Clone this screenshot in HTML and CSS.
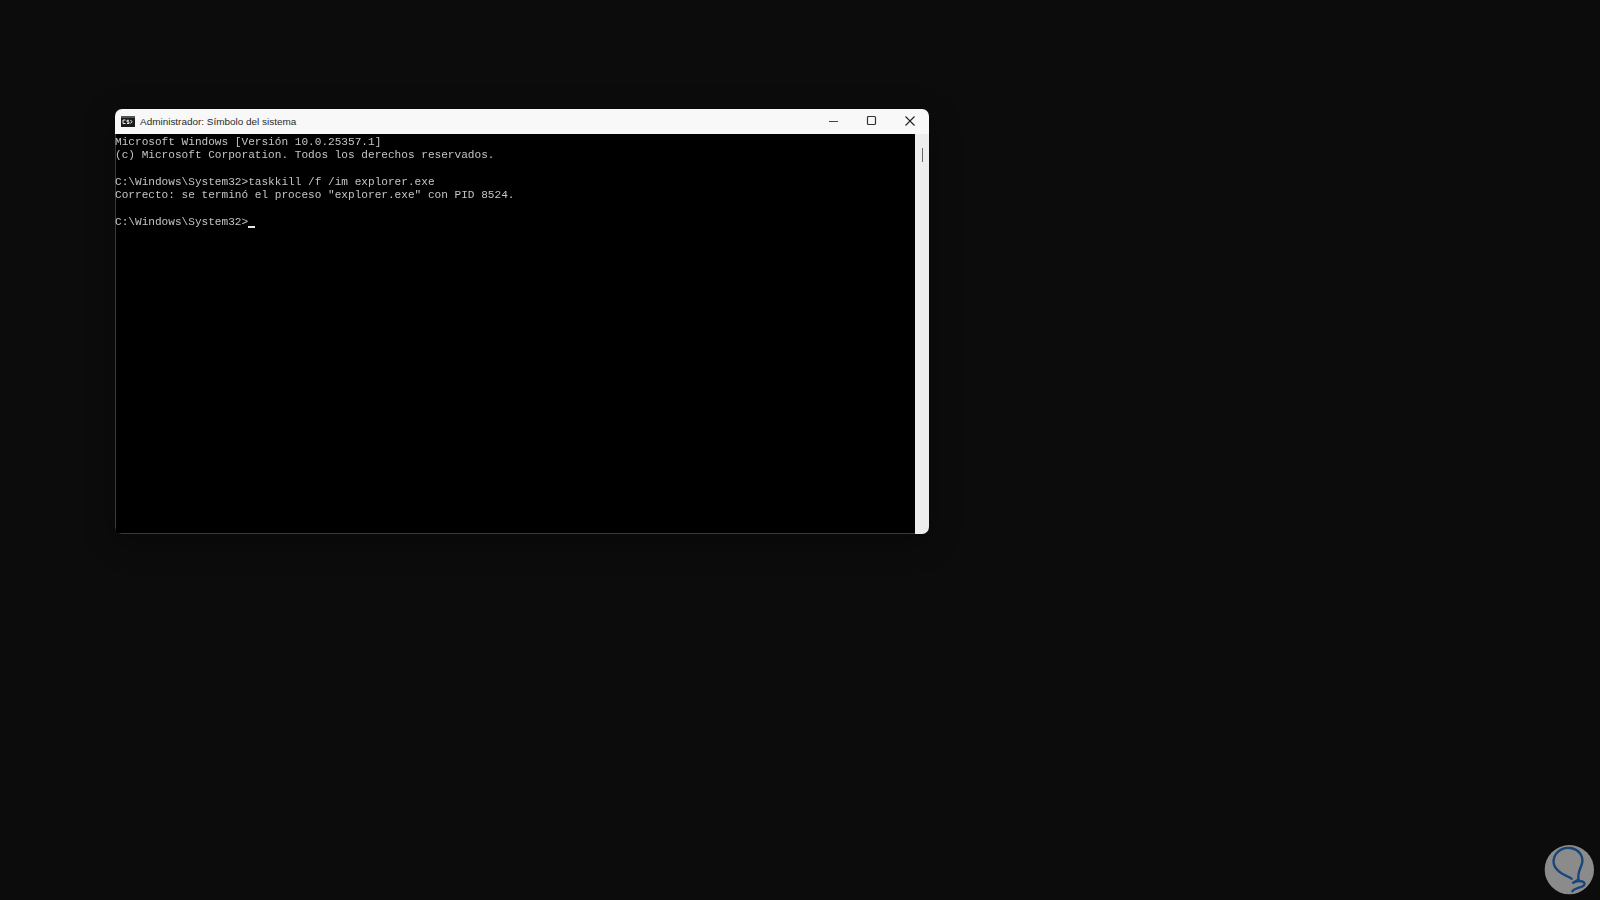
FILE: index.html
```html
<!DOCTYPE html>
<html lang="es">
<head>
<meta charset="utf-8">
<title>Administrador: Símbolo del sistema</title>
<link rel="stylesheet" href="styles.css">
</head>
<body>
<main class="desktop">
  <section class="window">
    <header class="titlebar">
      <svg class="app-icon" width="14" height="11" viewBox="0 0 14 11">
        <rect width="14" height="11" fill="#1c1c1c"/>
        <rect y="0" width="14" height="2" fill="#555"/>
        <path d="M2 4h2.5M2 4v3.5h2.5M6 7.5h2v-1.6h-2v-1.6h2M9.5 4l1.5 1.7-1.500 1.800" fill="none" stroke="#eee" stroke-width="1"/>
      </svg>
      <span class="title">Administrador: Símbolo del sistema</span>
      <div class="controls">
        <svg class="ctl" width="12" height="12" viewBox="0 0 12 12"><path d="M1 6.500h9" stroke="#444" stroke-width="1.200"/></svg>
        <svg class="ctl" width="12" height="12" viewBox="0 0 12 12"><rect x="1.500" y="1.500" width="8" height="8" rx="1" fill="none" stroke="#333" stroke-width="1.200"/></svg>
        <svg class="ctl" width="12" height="12" viewBox="0 0 12 12"><path d="M1.500 1.500l9 9M10.500 1.500l-9 9" stroke="#222" stroke-width="1.100"/></svg>
      </div>
    </header>
    <div class="client">
      <pre class="console">Microsoft Windows [Versión 10.0.25357.1]
(c) Microsoft Corporation. Todos los derechos reservados.

C:\Windows\System32&gt;taskkill /f /im explorer.exe
Correcto: se terminó el proceso "explorer.exe" con PID 8524.

C:\Windows\System32&gt;<span class="cursor"></span></pre>
      <div class="scrollbar"><span class="thumb"></span></div>
    </div>
  </section>
  <svg class="logo" width="70" height="70" viewBox="0 0 210 210">
    <circle cx="115" cy="125" r="74" fill="#8b8b8b"/>
    <path d="M122 152C100 140 72 130 68 105C65 78 90 56 118 60C146 64 160 88 152 110C146 126 138 140 143 154L124 166C138 156 166 158 160 170C155 180 132 178 124 190" fill="none" stroke="#17457a" stroke-width="7" stroke-linecap="round"/>
  </svg>
</main>
</body>
</html>
```

FILE: styles.css
```css
html, body {
  margin: 0;
  height: 100%;
  background: #0c0c0c;
}

.desktop {
  position: relative;
  width: 1600px;
  height: 900px;
  overflow: hidden;
  background: #0c0c0c;
}

.window {
  position: absolute;
  left: 115px;
  top: 109px;
  width: 814px;
  height: 425px;
  display: flex;
  flex-direction: column;
  border-radius: 7px;
  overflow: hidden;
  background: #000;
  box-shadow: 0 8px 30px rgba(0, 0, 0, 0.35);
}

.titlebar {
  flex: 0 0 25px;
  display: flex;
  align-items: center;
  padding: 0 0 1px 6px;
  box-sizing: border-box;
  background: #f8f8f8;
  font: 9.950px "Liberation Sans", sans-serif;
  color: #2a2a2a;
}

.app-icon {
  margin-right: 5px;
}

.title {
  flex: 1;
}

.controls {
  display: flex;
  gap: 26px;
  padding-right: 13px;
  padding-bottom: 1px;
}

.ctl {
  display: block;
}

.client {
  flex: 1;
  display: flex;
  min-height: 0;
  background: #000;
  box-shadow: inset 1px -1px 0 #3a3a3a;
}

.console {
  flex: 1;
  margin: 0;
  padding: 2px 0 0;
  color: #c4c4c4;
  font: 11.100px/13.300px "Liberation Mono", monospace;
  filter: blur(0.3px);
}

.cursor {
  display: inline-block;
  width: 7px;
  height: 2px;
  background: #e6e6e6;
  vertical-align: -3px;
}

.scrollbar {
  flex: 0 0 14px;
  background: #ededed;
  display: flex;
  justify-content: center;
  padding-top: 14px;
}

.thumb {
  width: 1px;
  height: 14px;
  background: #666;
}

.logo {
  position: absolute;
  right: -1px;
  bottom: 2px;
}
```
